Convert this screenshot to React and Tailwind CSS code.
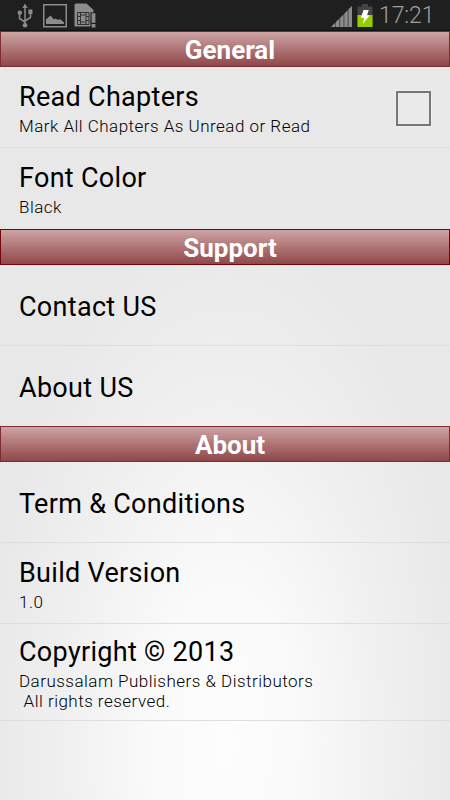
import React from "react";

const sections = [
  {
    title: "General",
    headerClass: "border-[#7d2c2f]",
    items: [
      {
        title: "Read Chapters",
        lines: ["Mark All Chapters As Unread or Read"],
        checkbox: true,
        height: "h-[81px]",
      },
      { title: "Font Color", lines: ["Black"], height: "h-[81px]" },
    ],
  },
  {
    title: "Support",
    headerClass: "border-[#760509]",
    items: [
      { title: "Contact US", height: "h-[81px]" },
      { title: "About US", height: "h-[80px]" },
    ],
  },
  {
    title: "About",
    headerClass: "border-[#7d2c2f]",
    items: [
      { title: "Term & Conditions", height: "h-[81px]" },
      { title: "Build Version", lines: ["1.0"], height: "h-[81px]" },
      {
        title: "Copyright © 2013",
        lines: ["Darussalam Publishers & Distributors", " All rights reserved."],
        height: "h-[97px]",
        last: true,
      },
    ],
  },
];

const UsbIcon = () => (
  <svg width="16" height="25" viewBox="0 0 16 25" fill="none" stroke="#8c8c8c">
    <path d="M8 4v18M8 19L2.5 15.5v-4M8 18l5.5-3.5v-4" strokeWidth="1.5" />
    <path d="M8 0.5l2.6 4.5H5.4z" fill="#8c8c8c" stroke="none" />
    <circle cx="8" cy="22.2" r="2.3" fill="#8c8c8c" stroke="none" />
    <circle cx="2.8" cy="9.8" r="2.2" fill="#8c8c8c" stroke="none" />
    <rect x="11.4" y="6.5" width="4" height="4.5" fill="#8c8c8c" stroke="none" />
  </svg>
);

const PictureIcon = () => (
  <svg width="24" height="24" viewBox="0 0 24 24">
    <rect x="0.75" y="0.75" width="22.5" height="22" fill="none" stroke="#8c8c8c" strokeWidth="1.5" />
    <path d="M3 20v-4.5l4.5-4 3.5 4 1.5-1 2.5 1.5 2-1 4 3.5v1.5z" fill="#8c8c8c" />
  </svg>
);

const SimIcon = () => (
  <svg width="23" height="26" viewBox="0 0 23 26">
    <path d="M0.5 2q0-1.5 1.5-1.5h10.5L19.5 7v16.5h-19z" fill="#8c8c8c" />
    <path d="M3.5 9.5h11.5v12H3.5zM6.5 9.5v12M12 9.5v12M3.5 13.5h3M3.5 17.5h3M12 13.5h3M12 17.5h3M6.5 12h5.5M6.5 19h5.5" fill="none" stroke="#333" strokeWidth="1" />
    <path d="M16.4 9.3H23v17h-6.6z" fill="#1f1f1f" />
    <path d="M17.6 10.3h3.8v9.5h-3.8zM17.6 21h3.8v3.5h-3.8z" fill="#8c8c8c" />
  </svg>
);

const SignalIcon = () => (
  <svg width="21" height="21" viewBox="0 0 21 21">
    <path d="M0 21L21 0v21z" fill="#565656" />
    <path d="M0 21l4-4v4zM5 21v-5l3-3v8zM9.3 21v-9.3l3-3V21zM13.5 21V7.5l3-3V21zM17.7 21V3.3L21 0v21z" fill="#8c8c8c" />
  </svg>
);

const BatteryIcon = () => (
  <svg width="16" height="24" viewBox="0 0 16 24">
    <path d="M5 0h6v2.5h4.5V23H0.5V2.5H5z" fill="#454545" />
    <rect x="0.5" y="11" width="15" height="12" fill="#99cc00" />
    <path d="M6.5 6h5.3L10 11.2l2.5 0.3-6.7 8.3 1.4-5.6-3.2-0.6z" fill="#fff" />
  </svg>
);

const StatusBar = () => (
  <div className="flex h-[31px] items-start justify-between border-b border-[#0b1214] bg-[#1f1f1f] pr-[17px] pl-[17px]">
    <div className="flex items-start pt-[3px]">
      <UsbIcon />
      <div className="ml-[10px] pt-[1px]">
        <PictureIcon />
      </div>
      <div className="ml-[7px]">
        <SimIcon />
      </div>
    </div>
    <div className="flex items-start">
      <div className="pt-[5.5px]">
        <SignalIcon />
      </div>
      <div className="ml-[5px] pt-[4px]">
        <BatteryIcon />
      </div>
      <span className="ml-[6px] w-[54px] text-[23px] leading-[31px] font-light tracking-[-0.1px] text-[#a0a0a0]">
        17:21
      </span>
    </div>
  </div>
);

const SectionHeader = ({ title, className }) => (
  <h2
    className={`flex h-[36px] items-center justify-center border bg-linear-to-b from-[#cda4a5] to-[#8f474a] pt-[2px] pl-[10px] text-[26px] leading-none font-bold text-white ${className}`}
  >
    {title}
  </h2>
);

const SettingRow = ({ item, border }) => (
  <div
    className={`flex items-center justify-between pr-[19px] pl-[19px] text-black ${item.height} ${border ? "border-b border-[#dedede]" : ""}`}
  >
    <div className="pt-[3px]">
      <div className="text-[27px] leading-[32px] tracking-[0.3px]">{item.title}</div>
      {item.lines && (
        <div className="mt-[3px] text-[17px] leading-[20.5px] font-light tracking-[0.48px] whitespace-pre">
          {item.lines.map((line) => (
            <div key={line}>{line}</div>
          ))}
        </div>
      )}
    </div>
    {item.checkbox && (
      <div className="mt-[3px] h-[35px] w-[35px] border-2 border-[#777] bg-[#eaeaea] shadow-[0_0_2px_1px_#f0f0f0]" />
    )}
  </div>
);

const App = () => {
  return (
    <div
      className="h-[800px] w-[450px] overflow-hidden bg-[#e8e8e8] bg-[radial-gradient(ellipse_245px_530px_at_225px_745px,#fdfdfd_0%,#fafafa_30%,#f0f0f0_65%,#e8e8e8_100%)] font-['Roboto',sans-serif]"
    >
      <StatusBar />
      {sections.map((section) => (
        <section key={section.title}>
          <SectionHeader title={section.title} className={section.headerClass} />
          {section.items.map((item, index) => (
            <SettingRow
              key={item.title}
              item={item}
              border={item.last || index < section.items.length - 1}
            />
          ))}
        </section>
      ))}
    </div>
  );
};

export default App;
